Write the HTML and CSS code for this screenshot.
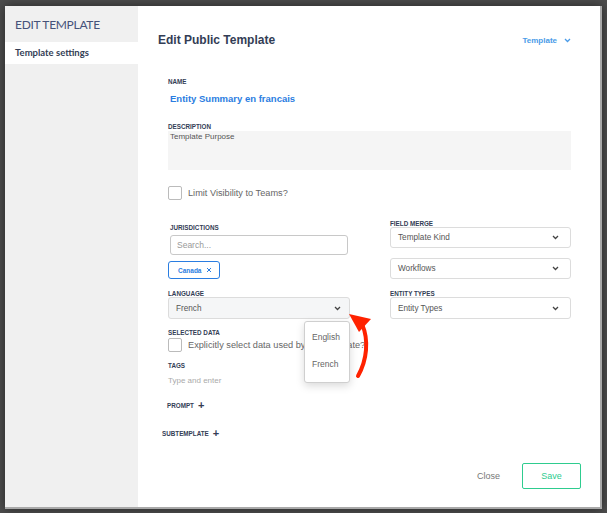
FILE: index.html
```html
<!DOCTYPE html>
<html lang="en">
<head>
  <meta charset="UTF-8" />
  <title>Edit Template</title>
  <link rel="stylesheet" href="styles.css">
</head>
<body>

<div class="modal">
  <aside class="sidebar">
    <h2>EDIT TEMPLATE</h2>
    <div class="side-item">Template settings</div>
  </aside>

  <main class="main">
    <header class="main-head">
      <h1>Edit Public Template</h1>
      <span class="type-pick">Template
        <svg width="7" height="5" viewBox="0 0 7 5"><path d="M1 1l2.5 2.5L6 1" fill="none" stroke="#4a9be8" stroke-width="1.3"/></svg>
      </span>
    </header>

    <section class="form">
      <div class="field">
        <label>Name</label>
        <div class="name-value">Entity Summary en francais</div>
      </div>

      <div class="field desc">
        <label>Description</label>
        <div class="textarea">Template Purpose</div>
      </div>

      <div class="check-row teams">
        <span class="box"></span>
        <span>Limit Visibility to Teams?</span>
      </div>

      <div class="two-col">
        <div class="col left">
          <label>Jurisdictions</label>
          <div class="search">Search...</div>
          <div class="chip">Canada
            <svg width="6" height="6" viewBox="0 0 6 6"><path d="M1 1l4 4M5 1L1 5" stroke="#2a7de1" stroke-width="1"/></svg>
          </div>
          <label class="lang-label">Language</label>
          <div class="select grey">French
            <svg width="7" height="5" viewBox="0 0 7 5"><path d="M1 1l2.5 2.5L6 1" fill="none" stroke="#444" stroke-width="1.3"/></svg>
          </div>
        </div>
        <div class="col right">
          <label>Field Merge</label>
          <div class="select">Template Kind
            <svg width="7" height="5" viewBox="0 0 7 5"><path d="M1 1l2.5 2.5L6 1" fill="none" stroke="#444" stroke-width="1.3"/></svg>
          </div>
          <div class="select workflows">Workflows
            <svg width="7" height="5" viewBox="0 0 7 5"><path d="M1 1l2.5 2.5L6 1" fill="none" stroke="#444" stroke-width="1.3"/></svg>
          </div>
          <label class="lang-label">Entity Types</label>
          <div class="select">Entity Types
            <svg width="7" height="5" viewBox="0 0 7 5"><path d="M1 1l2.5 2.5L6 1" fill="none" stroke="#444" stroke-width="1.3"/></svg>
          </div>
        </div>
      </div>

      <div class="field selected">
        <label>Selected Data</label>
        <div class="check-row">
          <span class="box"></span>
          <span>Explicitly select data used by this template?</span>
        </div>
      </div>

      <div class="field tags">
        <label>Tags</label>
        <div class="placeholder">Type and enter</div>
      </div>

      <div class="adder prompt">Prompt <span class="plus">+</span></div>
      <div class="adder subtemplate">Subtemplate <span class="plus">+</span></div>
    </section>

    <footer class="actions">
      <span class="close">Close</span>
      <button class="save">Save</button>
    </footer>

    <!-- open language dropdown -->
    <div class="menu">
      <div>English</div>
      <div>French</div>
    </div>

    <svg class="arrow" width="40" height="70" viewBox="0 0 40 70">
      <path d="M15 66 C24 50 26 30 19 14" fill="none" stroke="#ff2200" stroke-width="4" stroke-linecap="round"/>
      <path d="M6 4 L28 9 L16 22 Z" fill="#ff2200"/>
    </svg>
  </main>
</div>

</body>
</html>
```

FILE: styles.css
```css
* {
  margin: 0;
  padding: 0;
  box-sizing: border-box;
  font-family: 'Liberation Sans', Arial, sans-serif;
}

body {
  width: 607px;
  height: 513px;
  background: #4d4d4d;
  padding: 6px 5px 4px 5px;
  overflow: hidden;
}

.modal {
  display: flex;
  width: 597px;
  height: 503px;
  background: #fff;
  border-right: 2px solid #a9a9a9;
  border-bottom: 2px solid #a9a9a9;
  box-shadow: 0 0 10px rgba(0, 0, 0, 0.5);
}

.sidebar {
  width: 133px;
  background: #f0f0f0;
  flex-shrink: 0;
}

.sidebar h2 {
  font-family: 'Lato', sans-serif;
  font-weight: 400;
  font-size: 12px;
  letter-spacing: -0.3px;
  color: #46527a;
  padding: 11px 0 0 10px;
  height: 36px;
}

.side-item {
  background: #fff;
  height: 22px;
  line-height: 22px;
  padding-left: 10px;
  font-family: 'Lato', sans-serif;
  font-weight: 700;
  font-size: 9.5px;
  color: #333d55;
}

.main {
  flex: 1;
  position: relative;
  display: flex;
  flex-direction: column;
}

.main-head {
  display: flex;
  justify-content: space-between;
  align-items: center;
  padding: 27px 30px 0 20px;
}

.main-head h1 {
  font-size: 12px;
  font-weight: 700;
  color: #333d55;
}

.type-pick {
  font-size: 8px;
  font-weight: 700;
  color: #4a9be8;
  display: flex;
  align-items: center;
  gap: 7px;
}

.form {
  padding: 0 30px 0 30px;
  flex: 1;
}

label {
  display: block;
  font-size: 6.3px;
  line-height: 8px;
  font-weight: 700;
  text-transform: uppercase;
  color: #333d55;
}

.field:first-child {
  margin-top: 31px;
}

.name-value {
  margin: 7px 0 0 2px;
  font-size: 9.5px;
  font-weight: 700;
  color: #2a7de1;
}

.desc {
  margin-top: 19px;
}

.textarea {
  height: 39px;
  background: #f5f5f5;
  font-size: 8px;
  color: #555;
  padding: 1px 2px;
}

.check-row {
  display: flex;
  align-items: center;
  gap: 6px;
  font-size: 9.2px;
  color: #666;
}

.box {
  width: 14px;
  height: 14px;
  border: 1px solid #bbb;
  border-radius: 2px;
  background: #fff;
}

.teams {
  margin-top: 16px;
}

.two-col {
  display: grid;
  grid-template-columns: 182px 181px;
  column-gap: 40px;
  margin-top: 20px;
}

.col {
  display: flex;
  flex-direction: column;
}

.col.left {
  padding-top: 4px;
}

.col.left label:first-child {
  margin-left: 2px;
}

.col.right label:first-child {
  margin-bottom: -1px;
}

.search {
  margin: 3px 0 0 2px;
  width: 178px;
  height: 20px;
  border: 1px solid #c8c8c8;
  border-radius: 3px;
  font-size: 8.5px;
  color: #999;
  line-height: 18px;
  padding-left: 6px;
}

.chip {
  margin-top: 6px;
  width: 52px;
  height: 18px;
  border: 1px solid #2a7de1;
  border-radius: 3px;
  display: flex;
  align-items: center;
  justify-content: space-between;
  padding: 0 7px 0 9px;
  font-size: 6.5px;
  font-weight: 700;
  color: #2a7de1;
}

.col .lang-label {
  margin-top: 12px;
  line-height: 6px;
}

.col.right .lang-label {
  margin-top: 12px;
}

.select {
  height: 21px;
  border: 1px solid #dcdcdc;
  border-radius: 3px;
  display: flex;
  align-items: center;
  justify-content: space-between;
  padding: 0 11px 0 7px;
  font-size: 8.2px;
  color: #555;
  background: #fff;
}

.col .lang-label + .select {
  height: 22px;
}

.select.grey {
  background: #f5f6f7;
  padding-right: 8px;
}

.workflows {
  margin-top: 10px;
}

.selected {
  margin-top: 10px;
}

.selected .check-row {
  margin-top: 1px;
}

.tags {
  margin-top: 10px;
}

.placeholder {
  margin-top: 6px;
  font-size: 8px;
  color: #aaa;
}

.adder {
  font-size: 6.3px;
  font-weight: 700;
  text-transform: uppercase;
  color: #333d55;
  display: flex;
  align-items: center;
  gap: 4px;
}

.plus {
  font-size: 11px;
  font-weight: 700;
  line-height: 1;
}

.prompt {
  margin-top: 15px;
  margin-left: -1px;
}

.subtemplate {
  margin-top: 17px;
  margin-left: -6px;
}

.actions {
  display: flex;
  justify-content: flex-end;
  align-items: center;
  gap: 22px;
  padding: 0 20px 18px 0;
}

.close {
  font-size: 9px;
  color: #777;
}

.save {
  width: 59px;
  height: 26px;
  border: 1px solid #2ecc8f;
  border-radius: 2px;
  background: #fff;
  color: #2ecc8f;
  font-size: 9px;
}

.menu {
  position: absolute;
  left: 166px;
  top: 315px;
  width: 46px;
  height: 62px;
  background: #fff;
  border: 1px solid #cfcfcf;
  border-radius: 3px;
  box-shadow: 0 3px 8px rgba(0, 0, 0, 0.15);
  padding-top: 10px;
  font-size: 8.5px;
  color: #666;
}

.menu div {
  padding-left: 7px;
  height: 27px;
}

.arrow {
  position: absolute;
  left: 205px;
  top: 304px;
}
```
